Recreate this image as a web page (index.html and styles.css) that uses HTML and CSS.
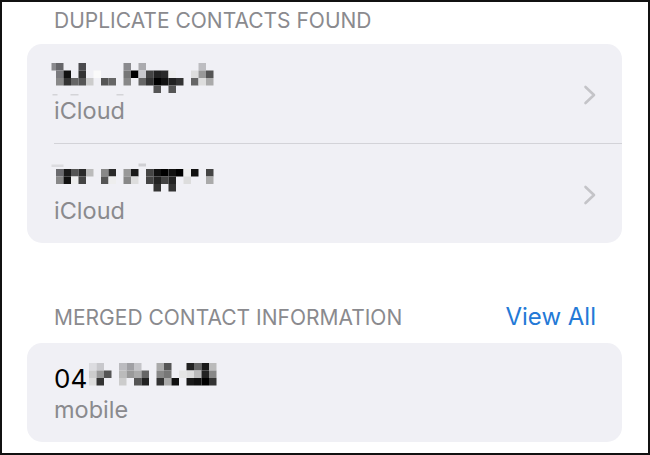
FILE: index.html
```html
<!DOCTYPE html>
<html lang="en">
<head>
<meta charset="utf-8">
<title>Duplicate Contacts</title>
<link rel="stylesheet" href="styles.css">
</head>
<body>
<div class="frame">
  <div class="section-head first"><span class="head-title">DUPLICATE CONTACTS FOUND</span></div>
  <div class="card">
    <div class="row">
      <div class="row-text">
        <div class="name">
          <svg class="mosaic" width="165" height="31" viewBox="0 0 165 31" aria-hidden="true">
            <g transform="translate(-5.5,-1)">
              <rect x="3" y="0" width="5" height="7.5" fill="#8a8a8e"/>
              <rect x="7.5" y="0" width="7.5" height="7.5" fill="#66666a"/>
              <rect x="30" y="0" width="7.5" height="7.5" fill="#4a4a4e"/>
              <rect x="75" y="0" width="7.5" height="7.5" fill="#8a8a8e"/>
              <rect x="90" y="0" width="7.5" height="7.5" fill="#aaaaae"/>
              <rect x="150" y="0" width="7.5" height="7.5" fill="#bdbdc1"/>

              <rect x="7.5" y="7.5" width="7.5" height="7.5" fill="#7a7a7e"/>
              <rect x="15" y="7.5" width="7.5" height="7.5" fill="#111"/>
              <rect x="30" y="7.5" width="7.5" height="7.5" fill="#333"/>
              <rect x="45" y="7.5" width="7.5" height="7.5" fill="#fafafa"/>
              <rect x="75" y="7.5" width="7.5" height="7.5" fill="#777"/>
              <rect x="82.5" y="7.5" width="7.5" height="7.5" fill="#000"/>
              <rect x="90" y="7.5" width="7.5" height="7.5" fill="#c8c8cc"/>
              <rect x="97.5" y="7.5" width="7.5" height="7.5" fill="#444"/>
              <rect x="105" y="7.5" width="7.5" height="7.5" fill="#222"/>
              <rect x="112.5" y="7.5" width="7.5" height="7.5" fill="#2a2a2a"/>
              <rect x="120" y="7.5" width="7.5" height="7.5" fill="#eee"/>
              <rect x="142.5" y="7.5" width="7.5" height="7.5" fill="#ddd"/>
              <rect x="150" y="7.5" width="7.5" height="7.5" fill="#999"/>
              <rect x="157.5" y="7.5" width="7.5" height="7.5" fill="#555"/>

              <rect x="7.5" y="15" width="7.5" height="7.5" fill="#888"/>
              <rect x="15" y="15" width="7.5" height="7.5" fill="#333"/>
              <rect x="22.5" y="15" width="7.5" height="7.5" fill="#666"/>
              <rect x="30" y="15" width="7.5" height="7.5" fill="#555"/>
              <rect x="37.5" y="15" width="7.5" height="7.5" fill="#ccc"/>
              <rect x="52.5" y="15" width="7.5" height="7.5" fill="#555"/>
              <rect x="60" y="15" width="7.5" height="7.5" fill="#666"/>
              <rect x="75" y="15" width="7.5" height="7.5" fill="#888"/>
              <rect x="90" y="15" width="7.5" height="7.5" fill="#666"/>
              <rect x="97.5" y="15" width="7.5" height="7.5" fill="#333"/>
              <rect x="105" y="15" width="7.5" height="7.5" fill="#000"/>
              <rect x="112.5" y="15" width="7.5" height="7.5" fill="#111"/>
              <rect x="120" y="15" width="7.5" height="7.5" fill="#222"/>
              <rect x="127.5" y="15" width="7.5" height="7.5" fill="#333"/>
              <rect x="142.5" y="15" width="7.5" height="7.5" fill="#666"/>
              <rect x="150" y="15" width="7.5" height="7.5" fill="#ddd"/>
              <rect x="157.5" y="15" width="7.5" height="7.5" fill="#aaa"/>

              <rect x="105" y="22.5" width="7.5" height="7.5" fill="#555"/>
              <rect x="120" y="22.5" width="7.5" height="7.5" fill="#555"/>

              <rect x="4" y="31" width="5" height="1.5" fill="#d4d4d8"/>
              <rect x="22" y="31" width="8" height="1.5" fill="#d4d4d8"/>
              <rect x="68" y="31" width="7" height="1.5" fill="#d4d4d8"/>
            </g>
          </svg>
        </div>
        <div class="sub">iCloud</div>
      </div>
      <svg class="chevron" width="14" height="20" viewBox="0 0 14 20" aria-hidden="true"><path d="M2.5 2 L11 10 L2.5 18" fill="none" stroke="#c4c4c8" stroke-width="2.6" stroke-linecap="round" stroke-linejoin="round"/></svg>
    </div>
    <div class="sep"></div>
    <div class="row">
      <div class="row-text">
        <div class="name">
          <svg class="mosaic" width="165" height="31" viewBox="0 0 165 31" aria-hidden="true">
            <g transform="translate(-5.5,-2.5)">
              <rect x="3" y="3" width="12" height="2.5" fill="#dcdce0"/>
              <rect x="90" y="2" width="7.5" height="3" fill="#cfcfd3"/>

              <rect x="7.5" y="7.5" width="7.5" height="7.5" fill="#6a6a6e"/>
              <rect x="15" y="7.5" width="7.5" height="7.5" fill="#1a1a1a"/>
              <rect x="22.5" y="7.5" width="7.5" height="7.5" fill="#555"/>
              <rect x="30" y="7.5" width="7.5" height="7.5" fill="#2a2a2a"/>
              <rect x="37.5" y="7.5" width="7.5" height="7.5" fill="#bbb"/>
              <rect x="52.5" y="7.5" width="7.5" height="7.5" fill="#888"/>
              <rect x="60" y="7.5" width="7.5" height="7.5" fill="#2a2a2a"/>
              <rect x="75" y="7.5" width="7.5" height="7.5" fill="#999"/>
              <rect x="82.5" y="7.5" width="7.5" height="7.5" fill="#1a1a1a"/>
              <rect x="97.5" y="7.5" width="7.5" height="7.5" fill="#444"/>
              <rect x="105" y="7.5" width="7.5" height="7.5" fill="#111"/>
              <rect x="112.5" y="7.5" width="7.5" height="7.5" fill="#000"/>
              <rect x="120" y="7.5" width="7.5" height="7.5" fill="#111"/>
              <rect x="127.5" y="7.5" width="7.5" height="7.5" fill="#000"/>
              <rect x="135" y="7.5" width="7.5" height="7.5" fill="#eee"/>
              <rect x="142.5" y="7.5" width="7.5" height="7.5" fill="#111"/>
              <rect x="157.5" y="7.5" width="7.5" height="7.5" fill="#444"/>

              <rect x="7.5" y="15" width="7.5" height="7.5" fill="#888"/>
              <rect x="15" y="15" width="7.5" height="7.5" fill="#111"/>
              <rect x="22.5" y="15" width="7.5" height="7.5" fill="#eee"/>
              <rect x="30" y="15" width="7.5" height="7.5" fill="#444"/>
              <rect x="52.5" y="15" width="7.5" height="7.5" fill="#555"/>
              <rect x="60" y="15" width="7.5" height="7.5" fill="#eee"/>
              <rect x="75" y="15" width="7.5" height="7.5" fill="#888"/>
              <rect x="82.5" y="15" width="7.5" height="7.5" fill="#ddd"/>
              <rect x="97.5" y="15" width="7.5" height="7.5" fill="#444"/>
              <rect x="105" y="15" width="7.5" height="7.5" fill="#222"/>
              <rect x="112.5" y="15" width="7.5" height="7.5" fill="#444"/>
              <rect x="120" y="15" width="7.5" height="7.5" fill="#222"/>
              <rect x="135" y="15" width="7.5" height="7.5" fill="#ddd"/>
              <rect x="157.5" y="15" width="7.5" height="7.5" fill="#aaa"/>

              <rect x="105" y="22.5" width="7.5" height="7.5" fill="#333"/>
              <rect x="120" y="22.5" width="7.5" height="7.5" fill="#333"/>
            </g>
          </svg>
        </div>
        <div class="sub">iCloud</div>
      </div>
      <svg class="chevron" width="14" height="20" viewBox="0 0 14 20" aria-hidden="true"><path d="M2.5 2 L11 10 L2.5 18" fill="none" stroke="#c4c4c8" stroke-width="2.6" stroke-linecap="round" stroke-linejoin="round"/></svg>
    </div>
  </div>

  <div class="section-head second">
    <span class="head-title">MERGED CONTACT INFORMATION</span>
    <span class="head-link">View All</span>
  </div>
  <div class="card">
    <div class="row">
      <div class="row-text">
        <div class="name"><span class="phone">04</span><svg class="mosaic-inline" width="135" height="23" viewBox="0 0 135 23" aria-hidden="true">
            <rect x="0" y="0" width="7.5" height="7.5" fill="#dcdce0"/>
            <rect x="7.5" y="0" width="7.5" height="7.5" fill="#c8c8cc"/>
            <rect x="30" y="0" width="7.5" height="7.5" fill="#bbbbbf"/>
            <rect x="37.5" y="0" width="7.5" height="7.5" fill="#a0a0a4"/>
            <rect x="45" y="0" width="7.5" height="7.5" fill="#c4c4c8"/>
            <rect x="67.5" y="0" width="7.5" height="7.5" fill="#aaa"/>
            <rect x="75" y="0" width="7.5" height="7.5" fill="#555"/>
            <rect x="97.5" y="0" width="7.5" height="7.5" fill="#222"/>
            <rect x="105" y="0" width="7.5" height="7.5" fill="#666"/>
            <rect x="112.5" y="0" width="7.5" height="7.5" fill="#1a1a1a"/>
            <rect x="120" y="0" width="7.5" height="7.5" fill="#bbb"/>

            <rect x="0" y="7.5" width="7.5" height="7.5" fill="#ccc"/>
            <rect x="7.5" y="7.5" width="7.5" height="7.5" fill="#999"/>
            <rect x="15" y="7.5" width="7.5" height="7.5" fill="#555"/>
            <rect x="30" y="7.5" width="7.5" height="7.5" fill="#bbb"/>
            <rect x="37.5" y="7.5" width="7.5" height="7.5" fill="#999"/>
            <rect x="45" y="7.5" width="7.5" height="7.5" fill="#aaa"/>
            <rect x="52.5" y="7.5" width="7.5" height="7.5" fill="#666"/>
            <rect x="67.5" y="7.5" width="7.5" height="7.5" fill="#888"/>
            <rect x="75" y="7.5" width="7.5" height="7.5" fill="#777"/>
            <rect x="90" y="7.5" width="7.5" height="7.5" fill="#e5e5e5"/>
            <rect x="97.5" y="7.5" width="7.5" height="7.5" fill="#ddd"/>
            <rect x="105" y="7.5" width="7.5" height="7.5" fill="#bbb"/>
            <rect x="112.5" y="7.5" width="7.5" height="7.5" fill="#222"/>
            <rect x="120" y="7.5" width="7.5" height="7.5" fill="#888"/>

            <rect x="0" y="15" width="7.5" height="7.5" fill="#ddd"/>
            <rect x="7.5" y="15" width="7.5" height="7.5" fill="#333"/>
            <rect x="30" y="15" width="7.5" height="7.5" fill="#ccc"/>
            <rect x="45" y="15" width="7.5" height="7.5" fill="#555"/>
            <rect x="52.5" y="15" width="7.5" height="7.5" fill="#222"/>
            <rect x="67.5" y="15" width="7.5" height="7.5" fill="#333"/>
            <rect x="75" y="15" width="7.5" height="7.5" fill="#aaa"/>
            <rect x="82.5" y="15" width="7.5" height="7.5" fill="#111"/>
            <rect x="97.5" y="15" width="7.5" height="7.5" fill="#1a1a1a"/>
            <rect x="105" y="15" width="7.5" height="7.5" fill="#111"/>
            <rect x="112.5" y="15" width="7.5" height="7.5" fill="#000"/>
            <rect x="120" y="15" width="7.5" height="7.5" fill="#333"/>
          </svg></div>
        <div class="sub">mobile</div>
      </div>
    </div>
  </div>
</div>
</body>
</html>
```
FILE: styles.css
```css
html, body {
  margin: 0;
  padding: 0;
  background: #ffffff;
}

.frame {
  box-sizing: border-box;
  width: 650px;
  height: 455px;
  border: 2px solid #111111;
  padding: 6px 26px 0 25px;
  overflow: hidden;
  font-family: Inter, "Noto Sans", "Liberation Sans", sans-serif;
  color: #000000;
}

.section-head {
  display: flex;
  align-items: baseline;
  justify-content: space-between;
  padding: 0 26px 0 27px;
}

.section-head.first {
  margin-bottom: 11px;
}

.section-head.second {
  margin-top: 62px;
  margin-bottom: 13px;
}

.head-title {
  font-size: 21px;
  line-height: 25px;
  color: #8a8a8e;
}

.head-link {
  font-size: 24px;
  line-height: 24px;
  color: #2479d6;
}

.card {
  background: #f0f0f5;
  border-radius: 15px;
  overflow: hidden;
}

.row {
  display: flex;
  align-items: center;
  padding: 20px 26px 17px 27px;
}

.row-text {
  flex: 1;
  min-width: 0;
}

.name {
  height: 31px;
  font-size: 26px;
  line-height: 31px;
  display: flex;
  align-items: flex-start;
}

.mosaic {
  display: block;
  overflow: visible;
}

.phone {
  display: block;
}

.mosaic-inline {
  display: block;
  margin-left: 2px;
}

.sub {
  font-size: 23.5px;
  line-height: 31px;
  color: #8a8a8e;
}

.chevron {
  display: block;
  flex: none;
  margin-right: -1px;
}

.sep {
  height: 1px;
  margin-left: 27px;
  background: #d3d3d8;
}
```
